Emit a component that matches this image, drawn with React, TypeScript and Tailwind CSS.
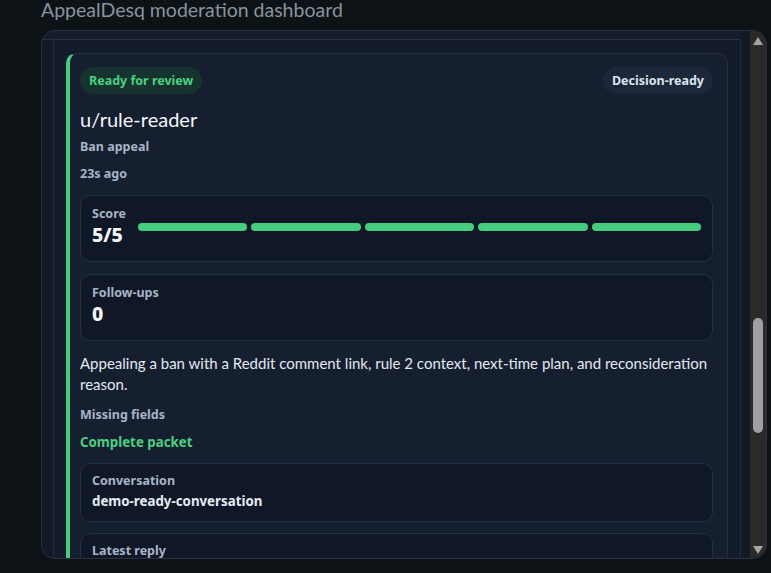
import React from "react";

const bars = [0, 1, 2, 3, 4];
const bold = { fontFamily: '"Noto Sans", Lato, sans-serif' };

function InfoBox({ label, value }: { label: string; value: string }) {
  return (
    <div className="rounded-[10px] border border-[#243044] bg-[#101827] px-[11px] pt-[9px] pb-[10px]">
      <div style={bold} className="text-[12.5px] font-bold leading-[16px] text-[#a8b4c8]">{label}</div>
      <div style={bold} className="mt-[2px] h-[20px] text-[13.3px] font-bold leading-[20px] text-[#e6ebf2]">{value}</div>
    </div>
  );
}

function StatBox({ label, value, children }: { label: string; value: string; children?: React.ReactNode }) {
  return (
    <div className="flex items-center gap-[12px] rounded-[10px] border border-[#243044] bg-[#101827] px-[11px] pt-[10px] pb-[14px]">
      <div>
        <div style={bold} className="text-[12.5px] font-bold leading-[16px] text-[#a8b4c8]">{label}</div>
        <div style={bold} className="mt-[1px] text-[19.5px] font-extrabold leading-[24px] text-[#f4f7fb]">{value}</div>
      </div>
      {children}
    </div>
  );
}

export default function App() {
  return (
    <div
      className="h-[573px] w-[771px] overflow-hidden bg-[#0c1215]"
      style={{ fontFamily: 'Lato, "Noto Sans", sans-serif' }}
    >
      <div className="h-[20px] pl-[41px] text-[19.5px] leading-[20px] text-[#89939c]">
        AppealDesq moderation dashboard
      </div>
      <div className="mt-[10px] ml-[41px] flex h-[529px] w-[726px] overflow-hidden rounded-[14px] border border-[#283242] bg-[#131a27]">
        <div className="flex min-w-0 flex-1 flex-col">
          <div className="h-[9px] w-[698px] shrink-0 border-b border-[#263042] bg-[#151d2c]" />
          <div className="mx-[11px] mr-[9px] flex-1 border-x border-[#222c3c] bg-[#141c2b] px-[12px] pt-[13px]">
            <div className="h-[600px] rounded-[10px] border border-l-4 border-[#243044] border-l-[#45cc7c] bg-[#161f30] pl-[10px] pr-[14px] pt-[13px]">
              <div className="flex items-start justify-between">
                <span style={bold} className="rounded-full bg-[#17332f] px-[9px] py-[5px] text-[12.5px] font-bold leading-[17px] text-[#48d17f]">
                  Ready for review
                </span>
                <span style={bold} className="rounded-full bg-[#1c273a] px-[9px] py-[5px] text-[12.5px] font-bold leading-[17px] text-[#dde4ee]">
                  Decision-ready
                </span>
              </div>
              <div className="mt-[12px] text-[20px] leading-[26px] text-[#f2f5f9]">u/rule-reader</div>
              <div style={bold} className="mt-[6px] text-[12.5px] font-bold leading-[18px] text-[#a8b4c8]">Ban appeal</div>
              <div style={bold} className="mt-[9px] text-[12.5px] font-bold leading-[18px] text-[#a8b4c8]">23s ago</div>

              <div className="mt-[12px]">
                <StatBox label="Score" value="5/5">
                  <div className="flex flex-1 gap-[4px]">
                    {bars.map((b) => (
                      <div key={b} className="h-[8px] flex-1 rounded-full bg-[#45cc7c]" />
                    ))}
                  </div>
                </StatBox>
              </div>

              <div className="mt-[12px]">
                <StatBox label="Follow-ups" value="0" />
              </div>

              <p className="mt-[12px] text-[15px] leading-[21px] text-[#e3e8ef]">
                Appealing a ban with a Reddit comment link, rule 2 context, next-time plan, and reconsideration reason.
              </p>
              <div style={bold} className="mt-[11px] text-[12.5px] font-bold leading-[18px] text-[#a8b4c8]">Missing fields</div>
              <div style={bold} className="mt-[9px] text-[13.3px] font-bold leading-[18px] text-[#48d17f]">Complete packet</div>

              <div className="mt-[12px]">
                <InfoBox label="Conversation" value="demo-ready-conversation" />
              </div>
              <div className="mt-[11px]">
                <InfoBox label="Latest reply" value="" />
              </div>
            </div>
          </div>
        </div>
        <div className="relative flex w-[16px] shrink-0 flex-col items-center bg-[#2b2a28]">
          <svg width="10" height="8" viewBox="0 0 10 8" className="mt-[6px]">
            <polygon points="5,0 10,8 0,8" fill="#a3a3a3" />
          </svg>
          <div className="mt-[273px] h-[115px] w-[10px] rounded-full bg-[#a0a0a0]" />
          <div className="flex-1" />
          <svg width="10" height="8" viewBox="0 0 10 8" className="mb-[4px]">
            <polygon points="0,0 10,0 5,8" fill="#a3a3a3" />
          </svg>
        </div>
      </div>
    </div>
  );
}
